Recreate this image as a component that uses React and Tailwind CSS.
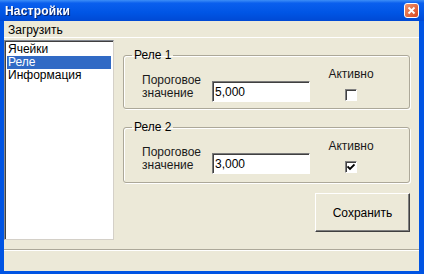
import { useState } from "react";

const font = { fontFamily: '"Liberation Sans", Arial, sans-serif' };

const RelayGroup = ({ title, value, active, tall }) => {
    return (
        <fieldset
            className={`border border-[#aca899] rounded-[3px] shadow-[inset_1px_1px_0_#ffffff,1px_1px_0_#ffffff] ${tall ? "h-[62px]" : "h-[60px]"}`}
        >
            <legend className="ml-[8px] px-[2px] text-[12px] leading-[12px] text-black">{title}</legend>
            <div className="flex items-start">
                {/* Threshold label */}
                <div className="ml-[18px] mt-[13px] w-[70px] text-[12px] leading-[13px] text-[#1a1a1a]">
                    Пороговое
                    <br />
                    значение
                </div>

                {/* Value input */}
                <div className="mt-[20px] w-[98px] h-[21px] bg-white border border-t-[#7a7a7a] border-l-[#7a7a7a] border-b-[#ffffff] border-r-[#ffffff] shadow-[inset_1px_1px_0_#404040] flex items-center px-[2px] text-[12px] text-black">
                    {value}
                </div>

                {/* Active checkbox */}
                <div className="ml-[20px] mt-[7px] w-[42px] flex flex-col items-center">
                    <span className="text-[12px] leading-[13px] text-[#1a1a1a]">Активно</span>
                    <div className="mt-[8px] w-[12px] h-[12px] bg-white border border-t-[#808080] border-l-[#808080] border-b-[#ffffff] border-r-[#ffffff] shadow-[inset_1px_1px_0_#404040] flex items-center justify-center">
                        {active && (
                            <svg width="8" height="8" viewBox="0 0 8 8">
                                <path d="M0.5 3.5 L3 6 L7.5 1.5" stroke="#000" strokeWidth="1.8" fill="none" />
                            </svg>
                        )}
                    </div>
                </div>
            </div>
        </fieldset>
    );
};

const App = () => {
    const [selected, setSelected] = useState(1);
    const items = ["Ячейки", "Реле", "Информация"];

    return (
        <div className="w-[424px] h-[274px] bg-[#0054e3] flex flex-col overflow-hidden" style={font}>
            {/* Title bar */}
            <div className="h-[21px] shrink-0 flex items-center justify-between pl-[5px] pr-[5px] bg-[linear-gradient(to_bottom,#3d8ef7_0%,#0a5fee_15%,#0055e5_60%,#0049d4_100%)]">
                <span className="text-white font-bold text-[12px] tracking-[0.2px] drop-shadow-[1px_1px_0_#0a246a]">
                    Настройки
                </span>
                <button className="w-[15px] h-[15px] rounded-[3px] border border-white bg-[linear-gradient(135deg,#f0956e,#d8461f)] flex items-center justify-center">
                    <svg width="9" height="9" viewBox="0 0 9 9">
                        <path d="M1.5 1.5 L7.5 7.5 M7.5 1.5 L1.5 7.5" stroke="#fff" strokeWidth="1.8" />
                    </svg>
                </button>
            </div>

            {/* Window body */}
            <div className="flex-1 ml-[4px] mr-[5px] mb-[3px] bg-[#ece9d8] flex flex-col">
                {/* Menu */}
                <div className="h-[17px] shrink-0 flex items-center px-[4px] pt-[1px] text-[12px] text-black border-b border-white">
                    Загрузить
                </div>

                {/* Main */}
                <div className="flex pt-[2px] h-[211px]">
                    {/* List box */}
                    <div className="w-[110px] h-[200px] bg-white border border-t-[#828790] border-l-[#828790] border-b-[#d4d0c8] border-r-[#d4d0c8] shadow-[inset_1px_1px_0_#404040] pt-[2px] px-[2px]">
                        {items.map((item, i) => (
                            <div
                                key={item}
                                onClick={() => setSelected(i)}
                                className={`h-[13px] leading-[13px] text-[12px] pl-[1px] ${selected === i ? "bg-[#316ac5] text-white" : "text-black"}`}
                            >
                                {item}
                            </div>
                        ))}
                    </div>

                    {/* Relay settings */}
                    <div className="ml-[9px] w-[287px] flex flex-col">
                        <div className="mt-[9px]">
                            <RelayGroup title="Реле 1" value="5,000" active={false} />
                        </div>
                        <div className="mt-[12px]">
                            <RelayGroup title="Реле 2" value="3,000" active={true} tall />
                        </div>
                        <div className="flex justify-end mt-[10px]">
                            <button className="w-[95px] h-[39px] bg-[#ece9d8] border border-t-white border-l-white border-b-[#404040] border-r-[#404040] shadow-[inset_-1px_-1px_0_#808080] text-[12px] text-black">
                                Сохранить
                            </button>
                        </div>
                    </div>
                </div>

                {/* Status bar */}
                <div className="flex-1 border-t border-[#aca899] shadow-[inset_0_1px_0_#ffffff]" />
            </div>
        </div>
    );
};

export default App;
